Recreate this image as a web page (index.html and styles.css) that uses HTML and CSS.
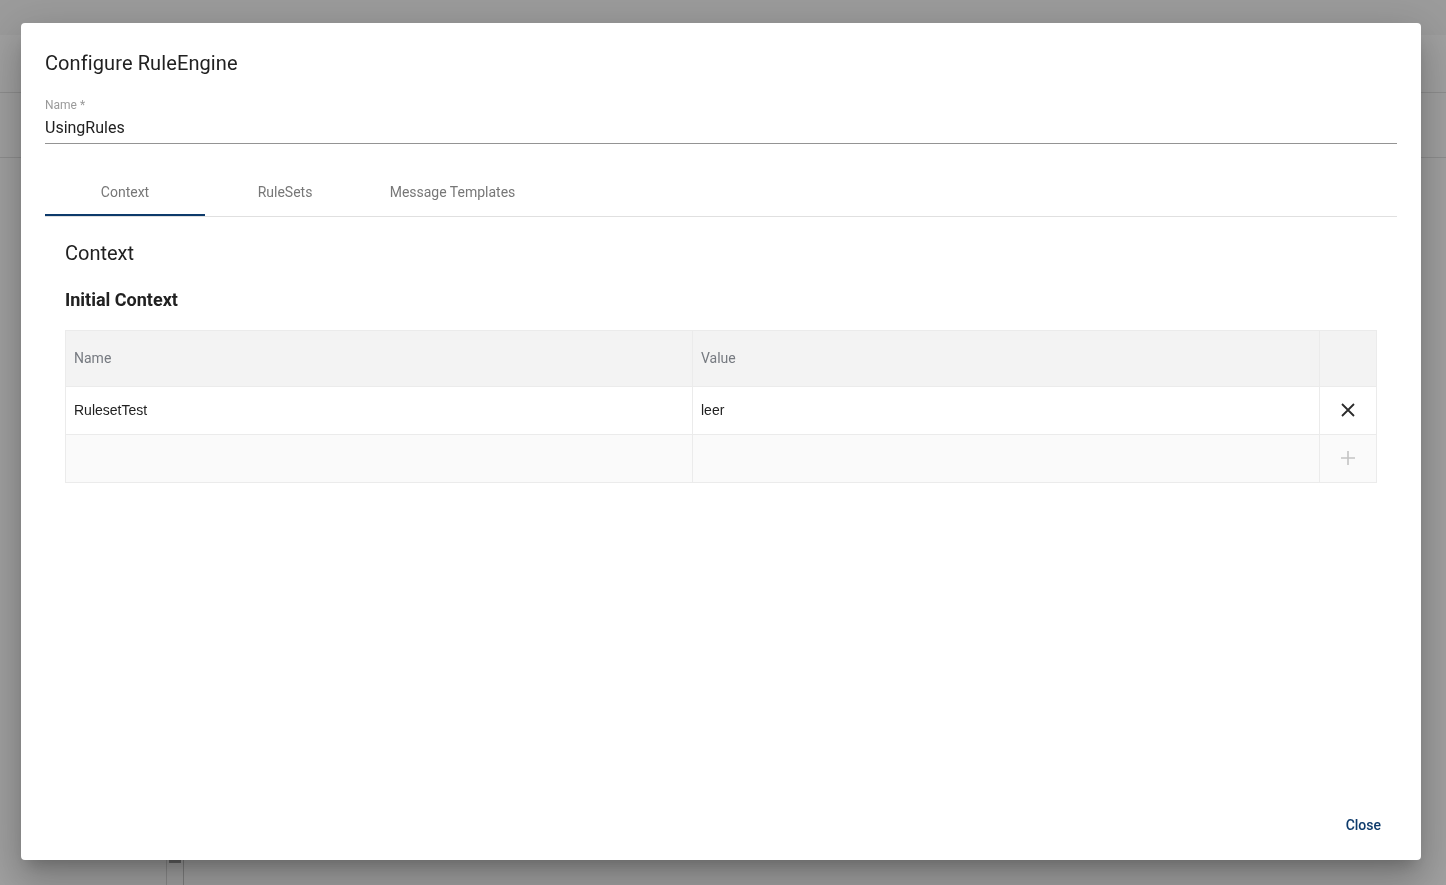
FILE: index.html
```html
<!DOCTYPE html>
<html lang="en">
<head>
<meta charset="utf-8">
<title>Configure RuleEngine</title>
<link rel="stylesheet" href="styles.css">
</head>
<body>
<div class="app">
  <div class="app-top"></div>
  <div class="app-row app-row-first"></div>
  <div class="app-row"></div>
  <div class="app-side">
    <div class="app-thumb"></div>
  </div>
</div>
<div class="backdrop">
  <div class="dialog">
    <h1 class="dialog-title">Configure RuleEngine</h1>
    <div class="field">
      <label class="field-label">Name *</label>
      <div class="field-input">UsingRules</div>
    </div>
    <div class="tabs">
      <div class="tab active">Context</div>
      <div class="tab">RuleSets</div>
      <div class="tab">Message Templates</div>
    </div>
    <div class="tab-body">
      <h2 class="section-title">Context</h2>
      <h3 class="sub-title">Initial Context</h3>
      <div class="grid">
        <div class="cell head">Name</div>
        <div class="cell head">Value</div>
        <div class="cell head icon"></div>
        <div class="cell">RulesetTest</div>
        <div class="cell">leer</div>
        <div class="cell icon">
          <svg width="16" height="16" viewBox="0 0 16 16"><path d="M2 2L14 14M14 2L2 14" stroke="#2b2b2b" stroke-width="1.8" fill="none"/></svg>
        </div>
        <div class="cell alt"></div>
        <div class="cell alt"></div>
        <div class="cell alt icon">
          <svg width="16" height="16" viewBox="0 0 16 16"><path d="M8 1V15M1 8H15" stroke="#c4c4c4" stroke-width="1.6" fill="none"/></svg>
        </div>
      </div>
    </div>
    <div class="actions">
      <button class="btn">Close</button>
    </div>
  </div>
</div>
</body>
</html>
```
FILE: styles.css
```css
* { box-sizing: border-box; }
html, body { margin: 0; padding: 0; height: 100%; }
body {
  font-family: Roboto, "Noto Sans", "Liberation Sans", sans-serif;
  background: #a1a1a1;
  overflow: hidden;
}
.app {
  height: 885px;
  display: flex;
  flex-direction: column;
  position: relative;
}
.app-top { height: 35px; background: #9c9c9c; flex: none; }
.app-row { height: 65px; border-bottom: 1px solid #8f8f8f; flex: none; }
.app-row-first { height: 58px; }
.app-side {
  position: absolute;
  left: 166px;
  bottom: 0;
  width: 18px;
  height: 30px;
  border-right: 1px solid #7f7f7f;
  border-left: 1px solid #8a8a8a;
}
.app-thumb { margin: 2px 2px 0 2px; height: 6px; background: #666; }

.backdrop {
  position: fixed;
  inset: 0;
  padding: 23px 25px 25px 21px;
  display: flex;
}
.dialog {
  width: 1400px;
  flex: none;
  background: #fff;
  border-radius: 4px;
  box-shadow: 0 11px 15px -7px rgba(0,0,0,.2), 0 24px 38px 3px rgba(0,0,0,.14), 0 9px 46px 8px rgba(0,0,0,.12);
  padding: 24px 24px 17px 24px;
  display: flex;
  flex-direction: column;
}
.dialog-title {
  margin: 0 0 20px 0;
  font-size: 20px;
  line-height: 32px;
  font-weight: 400;
  color: #212121;
  letter-spacing: 0.1px;
}
.field {
  display: flex;
  flex-direction: column;
  border-bottom: 1px solid #949494;
  padding-bottom: 5px;
}
.field-label {
  font-size: 12px;
  line-height: 12px;
  color: #9a9a9a;
}
.field-input {
  margin-top: 7px;
  font-size: 16px;
  line-height: 20px;
  color: #212121;
}
.tabs {
  margin-top: 24px;
  display: flex;
  border-bottom: 1px solid #e0e0e0;
}
.tab {
  width: 160px;
  height: 48px;
  display: flex;
  align-items: center;
  justify-content: center;
  font-size: 14px;
  color: #777;
  border-bottom: 2px solid transparent;
  padding-top: 2px;
}
.tab:nth-child(3) { width: 175px; }
.tab.active { border-bottom-color: #0d3a6b; }
.tab-body {
  padding: 20px 20px 0 20px;
}
.section-title {
  margin: 0;
  font-size: 20px;
  line-height: 32px;
  font-weight: 400;
  color: #212121;
}
.sub-title {
  margin: 17px 0 0 0;
  font-size: 18px;
  line-height: 28px;
  font-weight: 700;
  color: #212121;
}
.grid {
  margin-top: 16px;
  display: grid;
  grid-template-columns: 627px 627px 57px;
  grid-template-rows: 56px 48px 48px;
  border-top: 1px solid #ebebeb;
  border-left: 1px solid #ebebeb;
  width: 1312px;
}
.cell {
  border-right: 1px solid #ebebeb;
  border-bottom: 1px solid #ebebeb;
  display: flex;
  align-items: center;
  padding-left: 8px;
  padding-bottom: 2px;
  font-family: "Liberation Sans", Arial, sans-serif;
  font-size: 14px;
  color: #212121;
  background: #fff;
}
.cell.head {
  background: #f3f3f3;
  font-family: Roboto, "Noto Sans", sans-serif;
  color: #767a80;
  padding-bottom: 1px;
}
.cell.alt { background: #fafafa; }
.cell.icon {
  padding-left: 0;
  justify-content: center;
}
.actions {
  margin-top: auto;
  display: flex;
  justify-content: flex-end;
}
.btn {
  height: 36px;
  padding: 0 16px;
  border: 0;
  background: transparent;
  font-family: Roboto, "Noto Sans", sans-serif;
  font-size: 14px;
  font-weight: 500;
  color: #0d3a6b;
  cursor: pointer;
}
```
